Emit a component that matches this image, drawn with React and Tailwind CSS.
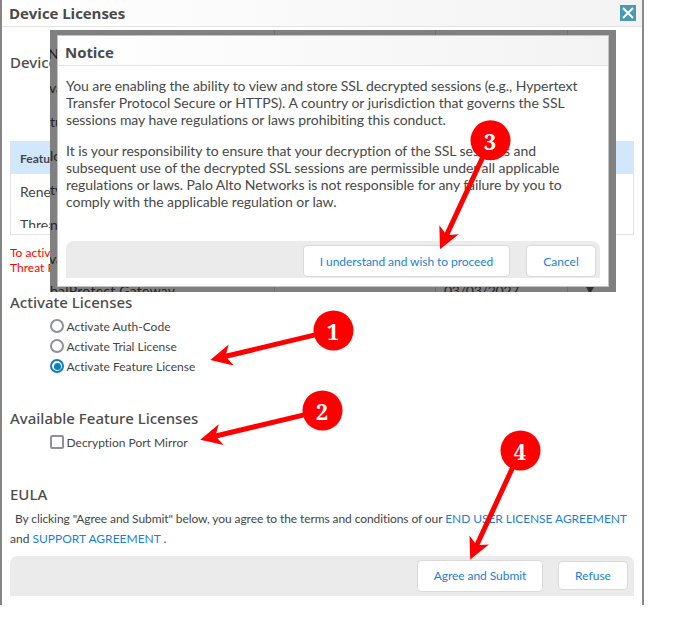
import React from "react";

const steps = [
  { n: "1", x: 333.5, y: 330.5, tx: 210.3, ty: 360 },
  { n: "2", x: 322.5, y: 410.5, tx: 200.3, ty: 439.7 },
  { n: "3", x: 490.5, y: 140.3, tx: 440, ty: 249.3 },
  { n: "4", x: 520.5, y: 450.5, tx: 470.2, ty: 559.5 },
];

function Callouts() {
  return (
    <svg className="pointer-events-none absolute left-0 top-0" width="694" height="625" viewBox="0 0 694 625">
      {steps.map((s) => {
        const dx = s.x - s.tx;
        const dy = s.y - s.ty;
        const angle = (Math.atan2(dy, dx) * 180) / Math.PI;
        return (
          <g key={s.n} fill="#ff0000">
            <g transform={`translate(${s.tx} ${s.ty}) rotate(${angle})`}>
              <path d="M0 0 L21.5 -10.7 L17 -2.5 H112 V2.5 H17 L21.5 10.7 Z" />
            </g>
            <circle cx={s.x} cy={s.y} r="20" />
            <text
              x={s.x - 0.5}
              y={s.y + 9.3}
              textAnchor="middle"
              fill="#fff"
              className="font-['Noto_Serif','Droid_Serif','DejaVu_Serif_Condensed','DejaVu_Serif',serif] text-[22px] font-bold"
            >
              {s.n}
            </text>
          </g>
        );
      })}
    </svg>
  );
}

function Button({ children, className }) {
  return (
    <button className={`flex shrink-0 items-center justify-center whitespace-nowrap rounded-[4px] border border-[#d9d9d9] bg-white text-[12px] text-[#1b7fd6] ${className}`}>
      {children}
    </button>
  );
}

function Radio({ label, checked }) {
  return (
    <label className="flex h-5 items-center gap-[2.5px] pl-10">
      <span className={`flex size-[14px] items-center justify-center rounded-full border-2 bg-white ${checked ? "border-[#0c7fbf]" : "border-[#8f8f9d]"}`}>
        {checked && <span className="size-[7px] rounded-full bg-[#0c7fbf]" />}
      </span>
      <span className="whitespace-nowrap pt-px">{label}</span>
    </label>
  );
}

function Heading({ children, className = "" }) {
  return (
    <h2 className={`whitespace-nowrap font-['Noto_Sans','Open_Sans',sans-serif] text-[15px] font-medium leading-5 text-[#4d4d4d] ${className}`}>
      {children}
    </h2>
  );
}

function TitleBar({ children, title, className }) {
  return (
    <header className={`flex items-center justify-between border-b border-[#e3e3e3] bg-linear-to-r from-white to-[#f3f3f3] ${className}`}>
      <h1 className="whitespace-nowrap font-['Open_Sans','Noto_Sans',sans-serif] text-[15px] font-bold tracking-[-0.05px] text-[#4a4a4a]">{title}</h1>
      {children}
    </header>
  );
}

function DimmedRows() {
  return (
    <div className="absolute inset-0 overflow-hidden whitespace-nowrap text-[14px] leading-[18px] text-[#242424]">
      <span className="absolute -left-[2px] top-[15px]">N</span>
      <span className="absolute -left-px top-[49px]">va</span>
      <span className="absolute left-0 top-[83px]">tu</span>
      <span className="absolute left-0 top-[117px]">lo</span>
      <span className="absolute left-0 top-[151px]">tv</span>
      <span className="absolute left-0 top-[186px]">n</span>
      <span className="absolute -left-px top-[220px]">va</span>
      <span className="absolute left-0 top-[252px] tracking-[0.25px]">balProtect Gateway</span>
      <span className="absolute left-[394px] top-[252px] tracking-[-0.25px]">03/03/2027</span>
      <span className="absolute left-[536px] top-[257px] size-0 border-x-4 border-t-[7px] border-x-transparent border-t-[#2c3038]" />
      <span className="absolute left-[224px] top-0 h-full w-px bg-[#6f6f6f]" />
      <span className="absolute left-[385px] top-0 h-full w-px bg-[#6f6f6f]" />
      <span className="absolute left-[517px] top-0 h-full w-px bg-[#6f6f6f]" />
    </div>
  );
}

function Notice() {
  return (
    <div className="absolute left-[50px] top-[30px] h-[262px] w-[566px] bg-[#808080] pb-[5px] pl-[7px] pr-[7px] pt-[5px]">
      <DimmedRows />
      <section className="relative flex h-full flex-col border border-[#c4c4c4] bg-white">
        <TitleBar title="Notice" className="h-[30px] shrink-0 pl-[7px] pt-[4px]" />
        <div className="grow whitespace-nowrap pl-2 pt-[11px] text-[14px] leading-[17px] text-[#484848]">
          <p>
            <span className="block tracking-[-0.07px]">You are enabling the ability to view and store SSL decrypted sessions (e.g., Hypertext</span>
            <span className="block tracking-[-0.02px]">Transfer Protocol Secure or HTTPS). A country or jurisdiction that governs the SSL</span>
            <span className="block tracking-[-0.05px]">sessions may have regulations or laws prohibiting this conduct.</span>
          </p>
          <p className="mt-[14px]">
            <span className="block tracking-[-0.04px]">It is your responsibility to ensure that your decryption of the SSL sessions and</span>
            <span className="block tracking-[-0.06px]">subsequent use of the decrypted SSL sessions are permissible under all applicable</span>
            <span className="block tracking-[-0.05px]">regulations or laws. Palo Alto Networks is not responsible for any failure by you to</span>
            <span className="block tracking-[-0.05px]">comply with the applicable regulation or law.</span>
          </p>
        </div>
        <footer className="mb-2 ml-2 mr-[8px] flex h-[37px] shrink-0 items-start justify-end gap-4 rounded-t-lg bg-[#ebebeb] pr-1 pt-1">
          <Button className="h-8 w-[207px] pt-px tracking-[-0.06px]">I understand and wish to proceed</Button>
          <Button className="h-8 w-[70px] pt-px">Cancel</Button>
        </footer>
      </section>
    </div>
  );
}

export default function App() {
  return (
    <div className="relative h-[625px] w-[694px] overflow-hidden bg-white font-['Lato',sans-serif] text-[12px] text-[#454545] [font-variant-ligatures:none]">
      <main className="flex h-[605px] w-[644px] flex-col border-l-2 border-r-2 border-l-[#858585] border-r-[#8a8a8a]">
        <TitleBar title="Device Licenses" className="h-[27px] shrink-0 pl-[7px] pr-[6px]">
          <button className="flex size-4 items-center justify-center bg-[#4b98b2]" aria-label="Close">
            <svg width="14" height="14" viewBox="0 0 14 14" stroke="#fff" strokeWidth="2">
              <path d="M2 2 L12 12 M12 2 L2 12" />
            </svg>
          </button>
        </TitleBar>
        <div className="flex grow flex-col pl-[8px] pr-2">
          <Heading className="mt-[25px]">Device Licenses</Heading>
          <div className="mt-[69px] h-[94px] shrink-0 overflow-hidden border border-[#e3e3e3]">
            <div className="flex h-8 items-center border-b border-[#e3e3e3] bg-[#d1e8fc] pl-[9px] pt-[3px] font-bold">Feature</div>
            <div className="flex h-[34px] items-center pl-[9px] text-[14px]">Renewal</div>
            <div className="flex h-5 items-start overflow-hidden pl-[9px] pt-[9px] text-[14px] leading-[16px]">
              <span className="h-[11px] overflow-hidden">Threat</span>
            </div>
          </div>
          <p className="mt-[10px] h-[30px] w-[240px] text-[12px] leading-[15px] text-[#ff0000]">
            To activate<br />Threat Prevention
          </p>
          <Heading className="mt-[17px]">Activate Licenses</Heading>
          <div className="mt-1">
            <Radio label="Activate Auth-Code" />
            <Radio label="Activate Trial License" />
            <Radio label="Activate Feature License" checked />
          </div>
          <Heading className="mt-8">Available Feature Licenses</Heading>
          <label className="mt-1 flex h-5 items-center gap-[2.5px] pl-10">
            <span className="size-[14px] rounded-[2px] border-2 border-[#8f8f9d] bg-white" />
            <span className="whitespace-nowrap pt-px">Decryption Port Mirror</span>
          </label>
          <Heading className="mt-8">EULA</Heading>
          <p className="mt-[5px] whitespace-nowrap leading-5">
            <span className="pl-[5px] tracking-[-0.09px]">By clicking "Agree and Submit" below, you agree to the terms and conditions of our </span>
            <a className="tracking-[-0.06px] text-[#1b7fd6]">END USER LICENSE AGREEMENT</a>
            <br />
            and <a className="text-[#1b7fd6]">SUPPORT AGREEMENT</a> .
          </p>
          <footer className="mt-[7px] flex h-10 shrink-0 items-center justify-end gap-[15px] rounded-t-lg bg-[#ebebeb] pr-[6px]">
            <Button className="h-8 w-[126px] tracking-[-0.06px]">Agree and Submit</Button>
            <Button className="mb-px h-[29px] w-[70px]">Refuse</Button>
          </footer>
        </div>
      </main>
      <Notice />
      <Callouts />
    </div>
  );
}
